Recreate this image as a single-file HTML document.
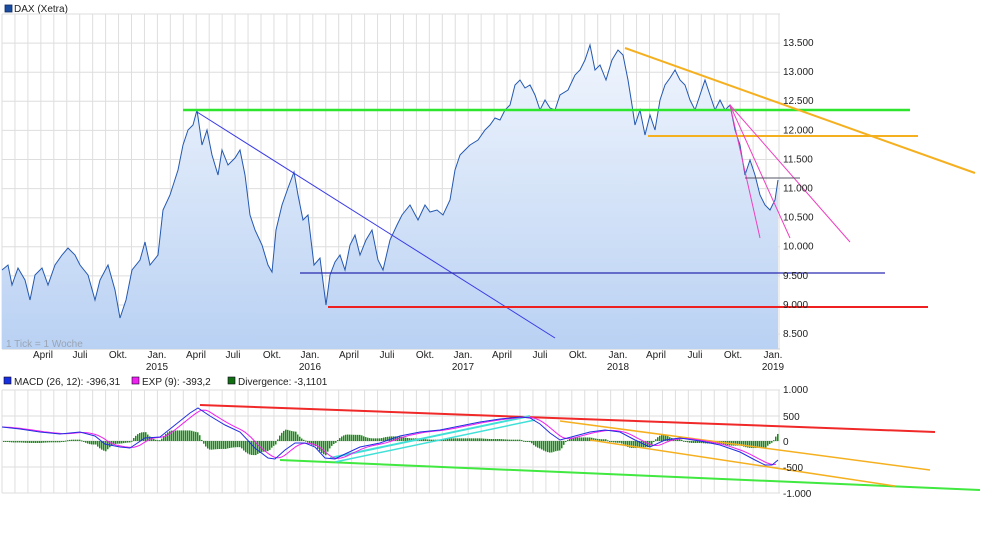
<!DOCTYPE html>
<html><head><meta charset="utf-8"><style>
body{margin:0;background:#fff;width:1000px;height:556px;overflow:hidden;font-family:"Liberation Sans",sans-serif}
svg{position:absolute;left:0;top:0}
text{font-family:"Liberation Sans",sans-serif;font-size:10px;fill:#222}
</style></head><body>
<svg id="s" width="1000" height="556" xmlns="http://www.w3.org/2000/svg">
<defs><linearGradient id="g" x1="0" y1="0" x2="0" y2="1"><stop offset="0" stop-color="#f0f5fd"/><stop offset="1" stop-color="#b9d1f3"/></linearGradient></defs>
<rect x="5" y="5" width="7" height="7" fill="#1a4da0" stroke="#102a60" stroke-width="0.8"/>
<text x="14" y="12">DAX (Xetra)</text>
<g id="grid"></g>
<polygon id="fill" fill="url(#g)"/>
<polyline id="dax" fill="none" stroke="#2458b0" stroke-width="1"/>
<text x="6" y="347" style="fill:#9aa4b4">1 Tick = 1 Woche</text>
<line x1="183" y1="110" x2="910" y2="110" stroke="#2de52d" stroke-width="2.5"/>
<line x1="197" y1="112" x2="555" y2="338" stroke="#3a3ae8" stroke-width="1"/>
<line x1="300" y1="273" x2="885" y2="273" stroke="#2a2ab0" stroke-width="1.2"/>
<line x1="328" y1="307" x2="928" y2="307" stroke="#ee2020" stroke-width="2"/>
<line x1="625" y1="48" x2="975" y2="173" stroke="#f5b020" stroke-width="2"/>
<line x1="648" y1="136" x2="918" y2="136" stroke="#f5b020" stroke-width="2"/>
<line x1="730" y1="105" x2="850" y2="242" stroke="#ee40c0" stroke-width="1"/>
<line x1="730" y1="105" x2="790" y2="238" stroke="#ee40c0" stroke-width="1"/>
<line x1="730" y1="105" x2="760" y2="238" stroke="#ee40c0" stroke-width="1"/>
<line x1="745" y1="178" x2="800" y2="178" stroke="#556" stroke-width="1"/>
<g id="ylab"></g><g id="xlab"></g>
<rect x="4" y="377" width="7" height="7" fill="#1530e0" stroke="#102" stroke-width="0.6"/><text x="14" y="385">MACD (26, 12): -396,31</text>
<rect x="132" y="377" width="7" height="7" fill="#f020f0" stroke="#102" stroke-width="0.6"/><text x="142" y="385">EXP (9): -393,2</text>
<rect x="228" y="377" width="7" height="7" fill="#107010" stroke="#102" stroke-width="0.6"/><text x="238" y="385">Divergence: -3,1101</text>
<g id="hist"></g>
<line x1="200" y1="405" x2="935" y2="432" stroke="#f02828" stroke-width="2"/>
<line x1="280" y1="460" x2="980" y2="490" stroke="#40e840" stroke-width="2"/>
<line x1="560" y1="421" x2="930" y2="470" stroke="#f5b020" stroke-width="1.5"/>
<line x1="590" y1="440" x2="895" y2="486" stroke="#f5b020" stroke-width="1.5"/>
<line x1="330" y1="458" x2="530" y2="416" stroke="#40e0d8" stroke-width="2"/>
<line x1="335" y1="462" x2="535" y2="420" stroke="#40e0d8" stroke-width="1.5"/>
<polyline id="exp" fill="none" stroke="#f020f0" stroke-width="1"/>
<polyline id="macd" fill="none" stroke="#2030e0" stroke-width="1"/>
<text x="783" y="393">1.000</text><text x="783" y="420">500</text><text x="783" y="445">0</text><text x="783" y="471">-500</text><text x="783" y="497">-1.000</text>
</svg>
<script>
var NS="http://www.w3.org/2000/svg";
function el(p,t,a,tx){var e=document.createElementNS(NS,t);for(var k in a)e.setAttribute(k,a[k]);if(tx)e.textContent=tx;document.getElementById(p).appendChild(e);}
for(var x=2;x<=780;x+=12.95){el('grid','line',{x1:x,y1:14,x2:x,y2:349,stroke:'#dedede','stroke-width':1});el('grid','line',{x1:x,y1:390,x2:x,y2:493,stroke:'#dedede','stroke-width':1});}
for(var y=14;y<350;y+=29.1)el('grid','line',{x1:2,y1:y,x2:780,y2:y,stroke:'#dedede'});
[390,416,441,467,493].forEach(function(y){el('grid','line',{x1:2,y1:y,x2:780,y2:y,stroke:'#dedede'})});
el('grid','line',{x1:2,y1:349,x2:780,y2:349,stroke:'#ccc'});
var yl=['13.500','13.000','12.500','12.000','11.500','11.000','10.500','10.000','9.500','9.000','8.500'];
yl.forEach(function(t,i){el('ylab','text',{x:783,y:46+i*29.1},t)});
var xl=[[43,'April'],[80,'Juli'],[118,'Okt.'],[157,'Jan.','2015'],[196,'April'],[233,'Juli'],[272,'Okt.'],[310,'Jan.','2016'],[349,'April'],[387,'Juli'],[425,'Okt.'],[463,'Jan.','2017'],[502,'April'],[540,'Juli'],[578,'Okt.'],[618,'Jan.','2018'],[656,'April'],[695,'Juli'],[733,'Okt.'],[773,'Jan.','2019']];
xl.forEach(function(a){el('xlab','text',{x:a[0],y:358,'text-anchor':'middle'},a[1]);if(a[2])el('xlab','text',{x:a[0],y:370,'text-anchor':'middle'},a[2]);});
var d="2,270 8,265 12,285 18,268 25,280 30,300 35,275 42,268 48,285 55,265 62,255 68,248 75,255 80,265 88,275 95,300 100,280 108,265 115,290 120,318 126,300 132,270 140,260 145,242 150,265 158,255 163,210 170,195 178,170 183,145 188,130 193,125 197,110 202,145 207,130 212,155 218,175 222,150 228,165 235,158 240,150 245,175 250,215 255,230 262,245 268,265 272,272 276,230 282,205 288,188 294,172 298,195 303,220 308,215 314,265 320,258 326,305 330,275 335,262 340,255 345,270 350,245 355,235 360,255 366,240 372,230 378,260 383,270 390,240 397,225 402,215 410,205 418,220 425,205 430,212 437,210 443,215 450,200 455,170 460,155 465,150 470,145 478,140 485,130 490,125 495,118 500,120 505,110 510,105 515,85 520,80 525,88 530,85 535,95 540,110 545,100 550,108 555,110 560,95 568,90 575,75 580,70 585,60 590,45 595,70 600,65 606,80 612,60 618,50 623,55 628,80 632,105 635,125 640,110 645,135 650,115 655,130 660,100 665,85 670,78 675,70 680,80 685,85 690,100 695,110 700,95 705,80 710,95 715,110 720,100 725,110 730,105 735,130 740,145 745,175 750,160 755,175 760,195 765,205 770,210 775,200 778,180";
document.getElementById('dax').setAttribute('points',d);
document.getElementById('fill').setAttribute('points','2,349 '+d+' 778,349');
var m=[[2,427],[20,429],[40,432],[60,434],[80,432],[95,436],[105,444],[120,447],[130,448],[145,438],[160,437],[175,425],[190,413],[198,408],[210,416],[225,425],[240,432],[255,448],[268,458],[275,459],[285,450],[295,443],[305,443],[315,447],[325,458],[335,459],[345,454],[360,447],[380,443],[400,436],[420,432],[440,430],[460,426],[480,422],[500,419],[520,417],[530,418],[540,424],[550,433],[560,440],[575,436],[590,432],[605,430],[620,432],[635,440],[650,447],[665,440],[680,438],[700,441],[720,445],[740,452],[755,460],[765,465],[772,465],[778,460]];
function f(x,o){o=o||0;x-=o;if(x<=m[0][0])return m[0][1];for(var i=1;i<m.length;i++)if(x<=m[i][0]){var a=m[i-1],b=m[i];return a[1]+(b[1]-a[1])*(x-a[0])/(b[0]-a[0]);}return m[m.length-1][1];}
function sm(x){var t=0;for(var k=0;k<=12;k++)t+=f(x,k);return t/13;}
document.getElementById('macd').setAttribute('points',m.map(function(p){return p.join(',')}).join(' '));
var ep=[];for(var x=2;x<=778;x+=3)ep.push(x+','+sm(x).toFixed(1));
document.getElementById('exp').setAttribute('points',ep.join(' '));
for(var x=3;x<=778;x+=2){var h=(sm(x)-f(x))*2.2;var y=441;el('hist','rect',{x:x,y:h>0?y-h:y,width:1.5,height:Math.max(Math.abs(h),1),fill:'#1a8a1a'});}
</script>
</body></html>
